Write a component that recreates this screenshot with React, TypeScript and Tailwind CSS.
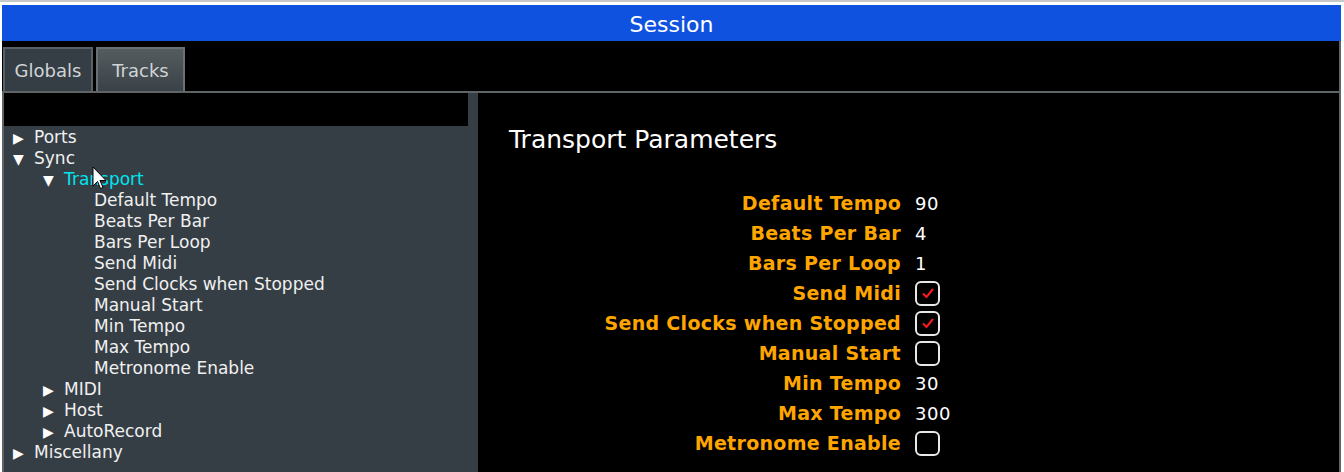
import React from 'react';

type Node = { label: string; depth: number; open?: boolean; leaf?: boolean; active?: boolean };

const tree: Node[] = [
  { label: 'Ports', depth: 0 },
  { label: 'Sync', depth: 0, open: true },
  { label: 'Transport', depth: 1, open: true, active: true },
  { label: 'Default Tempo', depth: 2, leaf: true },
  { label: 'Beats Per Bar', depth: 2, leaf: true },
  { label: 'Bars Per Loop', depth: 2, leaf: true },
  { label: 'Send Midi', depth: 2, leaf: true },
  { label: 'Send Clocks when Stopped', depth: 2, leaf: true },
  { label: 'Manual Start', depth: 2, leaf: true },
  { label: 'Min Tempo', depth: 2, leaf: true },
  { label: 'Max Tempo', depth: 2, leaf: true },
  { label: 'Metronome Enable', depth: 2, leaf: true },
  { label: 'MIDI', depth: 1 },
  { label: 'Host', depth: 1 },
  { label: 'AutoRecord', depth: 1 },
  { label: 'Miscellany', depth: 0 },
];

type Param = { label: string; value?: string; check?: boolean };

const params: Param[] = [
  { label: 'Default Tempo', value: '90' },
  { label: 'Beats Per Bar', value: '4' },
  { label: 'Bars Per Loop', value: '1' },
  { label: 'Send Midi', check: true },
  { label: 'Send Clocks when Stopped', check: true },
  { label: 'Manual Start', check: false },
  { label: 'Min Tempo', value: '30' },
  { label: 'Max Tempo', value: '300' },
  { label: 'Metronome Enable', check: false },
];

const indent = ['pl-[9px]', 'pl-[39px]', 'pl-[69px]'];

const TreeRow: React.FC<{ node: Node }> = ({ node }) => (
  <div className={`flex items-center h-[21px] ${indent[node.depth]}`}>
    <span className="w-[21px] text-[14px] text-white leading-none">
      {node.leaf ? '' : node.open ? '▼' : '▶'}
    </span>
    <span className={node.active ? 'text-[#00e5ee]' : 'text-[#f0f0f0]'}>{node.label}</span>
  </div>
);

const Check: React.FC<{ on: boolean }> = ({ on }) => (
  <div className="w-[25px] h-[25px] rounded-[6px] border-2 border-[#e8e8e8] flex items-center justify-center">
    {on && (
      <svg width="14" height="12" viewBox="0 0 14 12">
        <path d="M2 6.5 L5.5 10 L12 2" fill="none" stroke="#ff1a1a" strokeWidth="2" />
      </svg>
    )}
  </div>
);

export default function App() {
  return (
    <div className="w-[1344px] h-[472px] overflow-hidden bg-[#c8c8c8] pt-[2px] font-['DejaVu_Sans',sans-serif] relative">
      <div className="h-[470px] bg-white pl-[2px] pr-[3px] pt-[3px] flex flex-col">
        {/* Title bar */}
        <div className="h-[36px] bg-[#1052e0] text-white text-[22px] pt-[2px] flex items-center justify-center shrink-0">
          Session
        </div>

        <div className="flex-1 flex flex-col bg-black border-r-2 border-[#5f6566] min-h-0">
          {/* Tabs */}
          <div className="h-[52px] flex items-end gap-[3px] pl-[1px] border-b-2 border-[#5f6566] shrink-0">
            <div className="h-[44px] w-[90px] bg-[#353e45] border-2 border-b-0 border-[#5a6165] text-[#d0d4d6] text-[18px] flex items-center justify-center">
              Globals
            </div>
            <div className="h-[44px] w-[89px] bg-gradient-to-b from-[#555c60] to-[#3a4247] border-2 border-b-0 border-[#6a7174] text-[#d0d4d6] text-[18px] flex items-center justify-center">
              Tracks
            </div>
          </div>

          <div className="flex-1 flex min-h-0">
            {/* Tree */}
            <div className="w-[476px] bg-[#353e45] border-l-2 border-[#5f6566] flex flex-col text-[17px]">
              <div className="h-[33px] w-[464px] bg-black shrink-0" />
              <div className="pt-[1px]">
                {tree.map((n) => (
                  <TreeRow key={n.depth + n.label} node={n} />
                ))}
              </div>
            </div>

            {/* Parameters */}
            <div className="flex-1 bg-black pl-[31px] pt-[32px]">
              <div className="text-white text-[25px] leading-[30px]">Transport Parameters</div>
              <div className="mt-[33px] grid grid-cols-[392px_auto] gap-x-[14px] items-center justify-start">
                {params.map((p) => (
                  <React.Fragment key={p.label}>
                    <div className="h-[30px] flex items-center justify-end text-[#ffa500] font-bold text-[19px] tracking-[0.3px]">
                      {p.label}
                    </div>
                    <div className="h-[30px] flex items-center text-white text-[18px] tracking-[0.5px]">
                      {p.check === undefined ? p.value : <Check on={p.check} />}
                    </div>
                  </React.Fragment>
                ))}
              </div>
            </div>
          </div>
        </div>
      </div>

      {/* Mouse pointer */}
      <svg className="absolute left-[92px] top-[166px]" width="16" height="26" viewBox="0 0 16 26">
        <path d="M1 1 L1 20 L5.5 15.5 L8.5 22.5 L11 21.5 L8 14.5 L14 14.5 Z" fill="white" stroke="black" strokeWidth="1" />
      </svg>
    </div>
  );
}
